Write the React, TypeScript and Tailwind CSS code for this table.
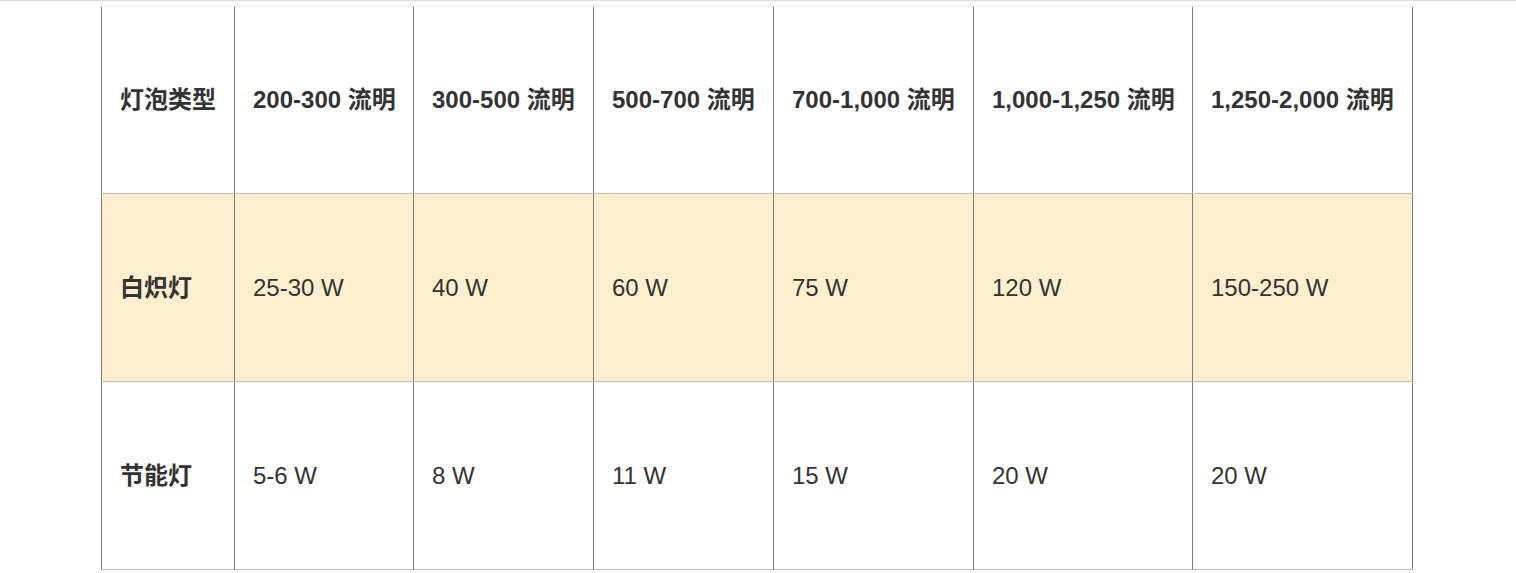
const headers = [
  '灯泡类型',
  '200-300 流明',
  '300-500 流明',
  '500-700 流明',
  '700-1,000 流明',
  '1,000-1,250 流明',
  '1,250-2,000 流明',
];

const rows = [
  { name: '白炽灯', values: ['25-30 W', '40 W', '60 W', '75 W', '120 W', '150-250 W'], highlight: true },
  { name: '节能灯', values: ['5-6 W', '8 W', '11 W', '15 W', '20 W', '20 W'], highlight: false },
];

const cols = 'grid grid-cols-[134px_179px_180px_180px_200px_219px_220px]';

export default function App() {
  return (
    <div
      className="min-h-screen border-t border-[#dddddd] bg-white pt-[4px] text-[24px] text-[#333333]"
      style={{ fontFamily: '"Liberation Sans", Arial, "Noto Sans CJK SC", sans-serif' }}
    >
      <div className="ml-[101px] w-[1312px]">
        {/* header */}
        <div className={`${cols} h-[189px] border-t-2 border-b border-t-[#f2f2f2] border-b-[#bbbbbb]`}>
          {headers.map((h, i) => (
            <div
              key={h}
              className={`flex items-center whitespace-nowrap border-r border-[#7a7a7a] pl-[18px] font-bold ${i === 0 ? 'border-l' : ''}`}
            >
              {h}
            </div>
          ))}
        </div>
        {rows.map((r) => (
          <div
            key={r.name}
            className={`${cols} h-[188px] border-b border-[#bbbbbb] ${r.highlight ? 'bg-[#ffefcf]' : 'bg-white'}`}
          >
            <div className="flex items-center border-r border-l border-[#7a7a7a] pl-[18px] font-bold">{r.name}</div>
            {r.values.map((v, i) => (
              <div key={i} className="flex items-center border-r border-[#7a7a7a] pl-[18px]">
                {v}
              </div>
            ))}
          </div>
        ))}
      </div>
    </div>
  );
}
